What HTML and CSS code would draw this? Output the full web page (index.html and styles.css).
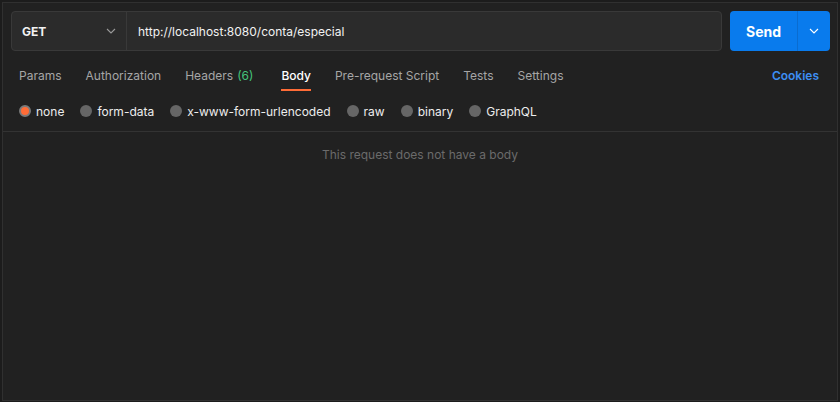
FILE: index.html
```html
<!DOCTYPE html>
<html lang="en">
<head>
<meta charset="utf-8">
<title>Request</title>
<link rel="stylesheet" href="styles.css">
</head>
<body>
<div class="panel">
  <div class="request-bar">
    <div class="url-box">
      <div class="method">
        <span class="method-name">GET</span>
        <svg class="chev" width="10" height="6" viewBox="0 0 10 6"><path d="M1 1l4 4 4-4" fill="none" stroke="#9a9a9a" stroke-width="1.1"/></svg>
      </div>
      <div class="url">http://localhost:8080/conta/especial</div>
    </div>
    <div class="send">
      <span class="send-label">Send</span>
      <span class="send-drop">
        <svg width="10" height="6" viewBox="0 0 10 6"><path d="M1 1l4 4 4-4" fill="none" stroke="#ffffff" stroke-width="1.1"/></svg>
      </span>
    </div>
  </div>

  <div class="tabs">
    <span class="tab">Params</span>
    <span class="tab">Authorization</span>
    <span class="tab">Headers<span class="count">(6)</span></span>
    <span class="tab active">Body</span>
    <span class="tab">Pre-request Script</span>
    <span class="tab">Tests</span>
    <span class="tab">Settings</span>
    <span class="cookies">Cookies</span>
  </div>

  <div class="radios">
    <label class="radio"><span class="dot selected"></span>none</label>
    <label class="radio"><span class="dot"></span>form-data</label>
    <label class="radio"><span class="dot"></span>x-www-form-urlencoded</label>
    <label class="radio"><span class="dot"></span>raw</label>
    <label class="radio"><span class="dot"></span>binary</label>
    <label class="radio"><span class="dot"></span>GraphQL</label>
  </div>

  <div class="body-area">
    <p class="empty">This request does not have a body</p>
  </div>
</div>
</body>
</html>
```

FILE: styles.css
```css
* { box-sizing: border-box; }
html, body { margin: 0; padding: 0; }
body {
  width: 840px;
  height: 402px;
  background: #1c1c1c;
  font-family: Inter, "Noto Sans", "Liberation Sans", sans-serif;
  font-size: 12px;
  color: #e6e6e6;
  padding: 2px 2px 1px 2px;
}
.panel {
  height: 399px;
  background: #212121;
  border: 1px solid #303030;
  display: flex;
  flex-direction: column;
}
.request-bar {
  display: flex;
  gap: 8px;
  padding: 8px 7px 0 8px;
  height: 49px;
}
.url-box {
  flex: 1;
  display: flex;
  background: #2b2b2b;
  border: 1px solid #393939;
  border-radius: 4px;
  height: 40px;
}
.method {
  width: 115px;
  border-right: 1px solid #393939;
  display: flex;
  align-items: center;
  justify-content: space-between;
  padding: 0 10px 0 10px;
}
.method-name {
  font-weight: 700;
  color: #f2f2f2;
  font-size: 12px;
}
.url {
  display: flex;
  align-items: center;
  padding-left: 11px;
  color: #f2f2f2;
}
.send {
  width: 100px;
  height: 40px;
  display: flex;
  background: #097bed;
  border-radius: 4px;
  color: #fff;
}
.send-label {
  flex: 1;
  display: flex;
  align-items: center;
  justify-content: center;
  font-weight: 700;
  font-size: 14px;
}
.send-drop {
  width: 33px;
  border-left: 1px solid #0a6cd0;
  display: flex;
  align-items: center;
  justify-content: center;
}
.tabs {
  display: flex;
  align-items: flex-end;
  gap: 24px;
  padding: 0 18px 0 16px;
  height: 39px;
}
.tab {
  height: 30px;
  display: flex;
  align-items: center;
  gap: 4px;
  color: #a6a6a6;
  border-bottom: 2px solid transparent;
  white-space: nowrap;
}
.tab.active {
  color: #ffffff;
  font-weight: 500;
  border-bottom-color: #ff6c37;
}
.count { color: #45c37a; margin-right: 4px; }
.cookies {
  margin-left: auto;
  height: 30px;
  display: flex;
  align-items: center;
  color: #3d8ef2;
  font-weight: 600;
  border-bottom: 2px solid transparent;
}
.radios {
  display: flex;
  align-items: center;
  gap: 16px;
  padding: 0 16px;
  height: 41px;
  border-bottom: 1px solid #333333;
}
.radio {
  display: flex;
  align-items: center;
  gap: 5px;
  color: #ededed;
}
.dot {
  width: 12px;
  height: 12px;
  border-radius: 50%;
  background: #666666;
}
.dot.selected {
  background: #ff6c37;
  border: 2px solid #7a7a7a;
}
.body-area {
  flex: 1;
}
.empty {
  margin: 15px 0 0 0;
  text-align: center;
  color: #6b6b6b;
  font-size: 12px;
}
```
